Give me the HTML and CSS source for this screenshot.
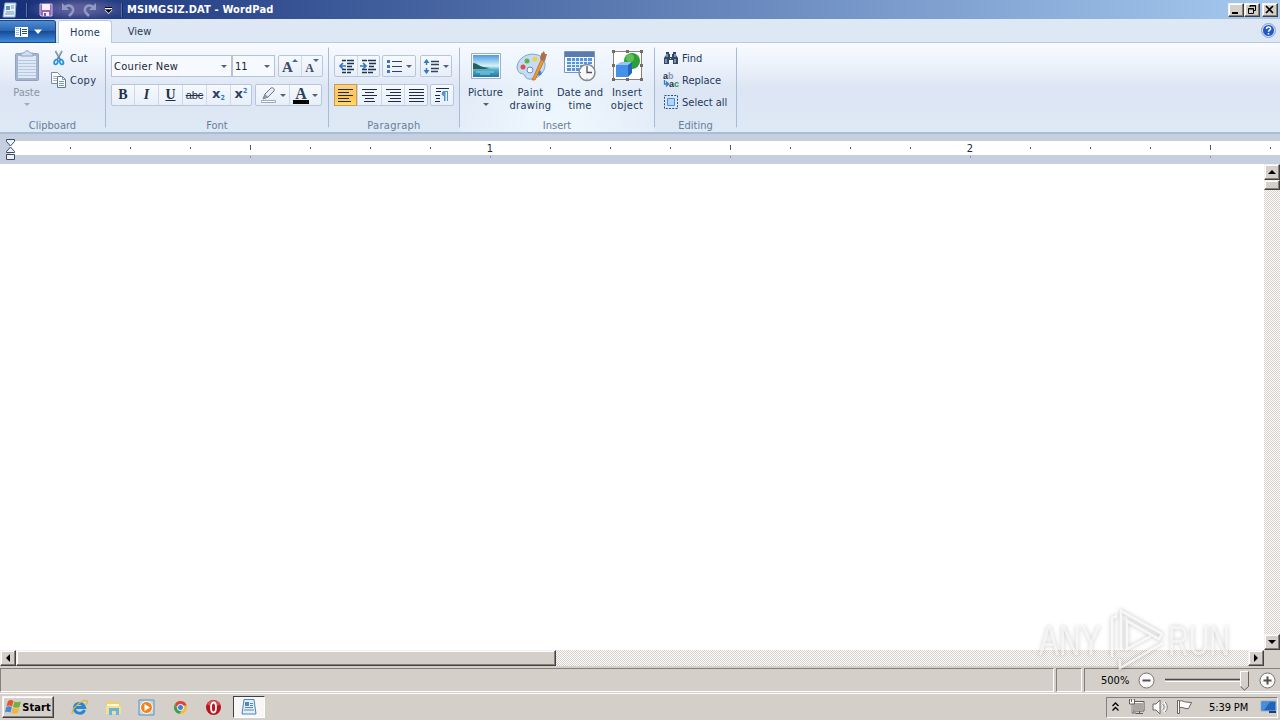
FILE: index.html
```html
<!DOCTYPE html>
<html lang="en">
<head>
  <meta charset="utf-8">
  <title>MSIMGSIZ.DAT - WordPad</title>
  <link rel="stylesheet" href="styles.css">
</head>
<body>

  <!-- Title bar -->
  <div class="titlebar">
    <div class="quick-access">
      <svg class="qa-app" width="16" height="16" viewBox="0 0 16 16"><path d="M3 1h11l-1 14H1z" fill="#e8f1fa" stroke="#87b2d9"/><path d="M4 4h4v4H4z" fill="#5c91bf"/><path d="M9 4h3M9 6h3M4 10h8M3 12h9" stroke="#7196b8"/></svg>
      <span class="qa-sep"></span>
      <svg class="qa-save" width="14" height="14" viewBox="0 0 14 14"><path d="M1 1h12v12H2l-1-1z" fill="#9268b4" stroke="#d0b8e8"/><path d="M3 1h8v6H3z" fill="#fbeef7"/><path d="M4 9h6v4H4z" fill="#f2e8fb"/><path d="M5 10h2v3H5z" fill="#7a559e"/></svg>
      <svg class="qa-undo" width="14" height="14" viewBox="0 0 14 14"><path d="M1 0v7h7z" fill="#8f9ac6"/><path d="M3 5c5-6 12 0 8 5l-3 3" fill="none" stroke="#8f9ac6" stroke-width="2.600"/></svg>
      <svg class="qa-redo" width="14" height="14" viewBox="0 0 14 14"><path d="M13 0v7H6z" fill="#8f9ac6"/><path d="M11 5C6-1-1 5 3 10l3 3" fill="none" stroke="#8f9ac6" stroke-width="2.600"/></svg>
      <svg class="qa-more" width="9" height="8" viewBox="0 0 9 8"><path d="M1 2.500h7" stroke="#fff"/><path d="M1 1.500h7" stroke="#000"/><path d="M.5 4h8l-4 4z" fill="#fff"/><path d="M1.500 4h6l-3 3z"/></svg>
      <span class="qa-sep"></span>
    </div>
    <span class="title">MSIMGSIZ.DAT - WordPad</span>
    <div class="window-buttons">
      <button class="btn3d"><svg width="12" height="10" viewBox="0 0 12 10"><path d="M2 7h6v2H2z"/></svg></button>
      <button class="btn3d"><svg width="12" height="10" viewBox="0 0 12 10"><path d="M4 2V.5h5.500v5H8M4 1h6M2.500 3.500h5v5h-5zM2 4h6" fill="none" stroke="#000"/></svg></button>
      <button class="btn3d close"><svg width="12" height="10" viewBox="0 0 12 10"><path d="M2 1l7 7M9 1L2 8" stroke="#000" stroke-width="1.700"/></svg></button>
    </div>
  </div>

  <!-- Tabs -->
  <div class="tabs">
    <button class="file-tab">
      <svg width="28" height="14" viewBox="0 0 28 14"><path d="M1 2h13v10H1z" fill="#fff"/><path d="M2 3.500h3M2 5.500h3M2 7.500h3M2 9.500h3" stroke="#9bb6dd"/><path d="M6.500 3v8" stroke="#1c4c94"/><path d="M8 4.500h5M8 6.500h5M8 8.500h5" stroke="#2c4c80"/><path d="M20 4.500h8l-4 4.500z" fill="#fff"/></svg>
    </button>
    <span class="tab active">Home</span>
    <span class="tab">View</span>
    <svg class="help" width="15" height="15" viewBox="0 0 15 15"><circle cx="7.500" cy="7.500" r="7" fill="#cddcf4" stroke="#8aa4d4"/><circle cx="7.500" cy="7.500" r="5.500" fill="#2459c4"/><path d="M5.500 6c0-3 4.500-2.500 4 0-.3 1.200-2 1-2 2.800M7.500 10v1.500" fill="none" stroke="#fff" stroke-width="1.500"/></svg>
  </div>

  <!-- Ribbon -->
  <div class="ribbon">
    <div class="group clipboard">
      <div class="group-body">
        <div class="big disabled paste">
          <svg width="32" height="32" viewBox="0 0 32 32"><rect x="4.500" y="3.500" width="23" height="27" rx="1" fill="#a3b5d0" stroke="#8ea3c4"/><path d="M7 6h18v22H7z" fill="#dfe8f5"/><path d="M7 10.500h18M7 13.500h18M7 16.500h18M7 19.500h18M7 22.500h18M7 25.500h18" stroke="#b7c7df"/><path d="M10 6V3h3c1-3 5-3 6 0h3v3z" fill="#d2deef" stroke="#8fa3c4"/></svg>
          <span>Paste</span>
          <i class="arrow"></i>
        </div>
        <div class="small-list">
          <div class="small">
            <svg width="16" height="16" viewBox="0 0 16 16"><path d="M4.500 1l5 9M11 1l-5 9" stroke="#6d86a5" stroke-width="1.700"/><path d="M5 1l3 5M10.500 1L8 5" stroke="#c5d3e2" stroke-width=".7"/><ellipse cx="5" cy="12" rx="1.700" ry="2.500" fill="none" stroke="#2494d8" stroke-width="1.800" transform="rotate(25 5 12)"/><ellipse cx="10.500" cy="12" rx="1.700" ry="2.500" fill="none" stroke="#2494d8" stroke-width="1.800" transform="rotate(-25 10.500 12)"/></svg>
            <span class="t-cut">Cut</span>
          </div>
          <div class="small">
            <svg width="16" height="16" viewBox="0 0 16 16"><path d="M.5.5h6l3 3v8h-9z" fill="#fff" stroke="#7c8ba0"/><path d="M2 4.500h4M2 6.500h4M2 8.500h4" stroke="#a3b8cf"/><path d="M6.500 4.500h5l3 3v8h-8z" fill="#fff" stroke="#67788e"/><path d="M11.500 4.500v3h3M8 9.500h5M8 11.500h5M8 13.500h5" fill="none" stroke="#6c9cc9"/></svg>
            <span class="t-copy">Copy</span>
          </div>
        </div>
      </div>
      <div class="group-label">Clipboard</div>
    </div>

    <div class="group font">
      <div class="group-body rows">
        <div class="row">
          <div class="combo family"><span>Courier New</span><i class="arrow"></i></div>
          <div class="combo size"><span>11</span><i class="arrow"></i></div>
          <div class="set grow">
            <div class="cell w22"><span class="letter big-a">A</span><i class="tri up"></i></div>
            <div class="cell w21"><span class="letter small-a">A</span><i class="tri"></i></div>
          </div>
        </div>
        <div class="row">
          <div class="set">
            <div class="cell w22"><b class="letter">B</b></div>
            <div class="cell w24"><i class="letter">I</i></div>
            <div class="cell w24"><u class="letter">U</u></div>
            <div class="cell w24"><s class="letter strike">abc</s></div>
            <div class="cell w24"><span class="xletter">x</span><sub>2</sub></div>
            <div class="cell w21"><span class="xletter">x</span><sup>2</sup></div>
          </div>
          <div class="set marker">
            <div class="cell w33"><svg width="17" height="17" viewBox="0 0 17 17"><path d="M1.500 13.500h14v2h-14z" fill="#fff" stroke="#a0a8b5"/><path d="M3 12l2-5 6-6c2-1 4 1 3 3L8 10z" fill="#e9edf3" stroke="#697486"/><path d="M5 7l3 3-5 2z" fill="#8b98aa"/></svg><i class="arrow"></i></div>
            <div class="cell w32"><span class="color-a">A</span><i class="arrow"></i></div>
          </div>
        </div>
      </div>
      <div class="group-label">Font</div>
    </div>

    <div class="group paragraph">
      <div class="group-body rows">
        <div class="row">
          <div class="set">
            <div class="cell w22"><svg width="17" height="15" viewBox="0 0 17 15"><path d="M4 1.500h4M9 1.500h7M9 4.500h7M9 7.500h5M4 10.500h4M9 10.500h7M4 13.500h4M9 13.500h4" stroke="#1e3254" stroke-width="1.500"/><path d="M8 7H2m3-3L2 7l3 3" fill="none" stroke="#2e78cf" stroke-width="1.700"/></svg></div>
            <div class="cell w22"><svg width="17" height="15" viewBox="0 0 17 15"><path d="M2 1.500h5M8 1.500h8M9 4.500h7M9 7.500h5M2 10.500h5M8 10.500h8M2 13.500h5M8 13.500h5" stroke="#1e3254" stroke-width="1.500"/><path d="M0 7h6M3 4l3 3-3 3" fill="none" stroke="#2e78cf" stroke-width="1.700"/></svg></div>
          </div>
          <div class="set bullets">
            <div class="cell w32"><svg width="17" height="15" viewBox="0 0 17 15"><path d="M1 1h3v3H1zM1 6h3v3H1zM1 11h3v3H1z" fill="#3c75b9"/><path d="M6 2.500h10M6 7.500h10M6 12.500h10" stroke="#33435d"/></svg><i class="arrow"></i></div>
          </div>
          <div class="set spacing">
            <div class="cell w30"><svg width="17" height="17" viewBox="0 0 17 17"><path d="M8 3.500h8M8 6.500h8M8 10.500h8M8 13.500h7" stroke="#33435d" stroke-width="1.300"/><path d="M3.500 2v5M3.500 10v5" stroke="#2e78cf" stroke-width="1.500"/><path d="M.5 5l3-4 3 4zM.5 12l3 4 3-4z" fill="#2e78cf"/></svg><i class="arrow"></i></div>
          </div>
        </div>
        <div class="row">
          <div class="set">
            <div class="cell w23 on"><svg width="15" height="13" viewBox="0 0 15 13"><path d="M0 .5h15M0 3.500h11M0 6.500h15M0 9.500h11M0 12.500h13" stroke="#1e2c48" stroke-width="1.200"/></svg></div>
            <div class="cell w24"><svg width="15" height="13" viewBox="0 0 15 13"><path d="M0 .5h15M3 3.500h9M0 6.500h15M3 9.500h9M2 12.500h11" stroke="#1e2c48" stroke-width="1.200"/></svg></div>
            <div class="cell w23"><svg width="15" height="13" viewBox="0 0 15 13"><path d="M0 .5h15M4 3.500h11M0 6.500h15M4 9.500h11M2 12.500h13" stroke="#1e2c48" stroke-width="1.200"/></svg></div>
            <div class="cell w23"><svg width="15" height="13" viewBox="0 0 15 13"><path d="M0 .5h15M0 3.500h15M0 6.500h15M0 9.500h15M0 12.500h15" stroke="#1e2c48" stroke-width="1.200"/></svg></div>
          </div>
          <div class="set mark">
            <div class="cell w22"><svg width="14" height="14" viewBox="0 0 14 14"><path d="M1 .5h13M1 3.500h5M0 7.500h5M1 10.500h4M0 13.500h5" stroke="#1e2c48" stroke-width="1.200"/><path d="M13 3H9C6 3 6 8 9 8v5h1.500V4H12v9h1z" fill="#4b91dc"/></svg></div>
          </div>
        </div>
      </div>
      <div class="group-label">Paragraph</div>
    </div>

    <div class="group insert">
      <div class="group-body">
        <div class="big picture">
          <svg width="32" height="32" viewBox="0 0 32 32"><defs><linearGradient id="sky" x2="0" y2="1"><stop offset="0" stop-color="#4a9ce4"/><stop offset=".5" stop-color="#d8f2f7"/><stop offset=".65" stop-color="#57b3cf"/><stop offset="1" stop-color="#2274a4"/></linearGradient></defs><path d="M1.500 3.500h29v25h-29z" fill="#fff" stroke="#a2aebd"/><path d="M3 5h26v22H3z" fill="url(#sky)"/><path d="M3 13c4 0 6 3 10 4l7 1-5 1H3z" fill="#28605c"/><path d="M6 22h18M10 24h10" stroke="#8ed5e5"/></svg>
          <span>Picture</span>
          <i class="arrow"></i>
        </div>
        <div class="big paint">
          <svg width="32" height="32" viewBox="0 0 32 32"><path d="M2 17C3 7 14 2 23 5c8 3 9 12 4 18-5 7-16 8-17 3-1-4-7 0-8-9z" fill="#c5dcf2" stroke="#7aa4cd"/><circle cx="8" cy="17" r="2.500" fill="#e44c52"/><circle cx="12" cy="11" r="2.500" fill="#5bb346"/><circle cx="20" cy="9" r="2.500" fill="#f1d143"/><circle cx="15" cy="20" r="3" fill="#f7fbff" stroke="#5c8fc3"/><circle cx="24" cy="23" r="2.500" fill="#3d83d5"/><path d="M17 30l9-20 3 1-9 19z" fill="#ef9735" stroke="#b7651d" stroke-width=".7"/><path d="M25 9l1-5 3-3 1 3 2 0-2 7-4-1z" fill="#ae7049"/></svg>
          <span class="t-paint">Paint<br>drawing</span>
        </div>
        <div class="big date">
          <svg width="32" height="32" viewBox="0 0 32 32"><path d="M.5 1.500h30v21H.5z" fill="#fff" stroke="#7c94b8"/><path d="M1 2h29v5H1z" fill="#587dad"/><path d="M3 8h25v13H3z" fill="#5594db"/><path d="M7.500 8v14M11.500 8v14M15.500 8v14M19.500 8v14M23.500 8v14M3 11.500h25M3 14.500h25M3 17.500h25" stroke="#e6f0fc"/><circle cx="23" cy="22.500" r="8" fill="#f8f8f8" stroke="#858a90" stroke-width="1.500"/><path d="M23 16v6.500h5" fill="none" stroke="#4c5158" stroke-width="1.300"/><path d="M23 28.500v1M16 22.500h1" stroke="#666"/></svg>
          <span>Date and<br>time</span>
        </div>
        <div class="big object">
          <svg width="32" height="32" viewBox="0 0 32 32"><path d="M2.500 1.500h28v28h-28z" fill="#fff" stroke="#8b8179"/><circle cx="21" cy="11" r="8" fill="#2c9f38"/><circle cx="19" cy="8" r="4" fill="#5cc258"/><path d="M5 15l5-3h11l-3 3z" fill="#92c6fa"/><path d="M5 15h12v12H5z" fill="#4591e7"/><path d="M17 15l4-3v11l-4 4z" fill="#2467b7"/><path d="M1 0h3v3H1zM15 0h3v3h-3zM29 0h3v3h-3zM1 14h3v3H1zM29 14h3v3h-3zM1 28h3v3H1zM15 28h3v3h-3zM29 28h3v3h-3z" fill="#766b65"/></svg>
          <span class="t-object">Insert<br>object</span>
        </div>
      </div>
      <div class="group-label">Insert</div>
    </div>

    <div class="group editing">
      <div class="group-body">
        <div class="small-list">
          <div class="small">
            <svg width="16" height="16" viewBox="0 0 16 16"><path d="M3 2h3v2h1v3h2V4h1V2h3v3l2 3v6h-5v-4H6v4H1V8l2-3z" fill="#32466a"/><path d="M4 4v3M12 4v3M3 9v4M12 9v4M7.500 8v1" stroke="#cddbf0"/></svg>
            <span>Find</span>
          </div>
          <div class="small">
            <svg width="16" height="16" viewBox="0 0 16 16"><text x="0" y="7" class="svg-bold" fill="#1e2c48">a</text><text x="5" y="7" class="svg-bold" fill="#8996aa">b</text><text x="6" y="15" class="svg-bold" fill="#1e2c48">a</text><text x="11" y="15" class="svg-bold" fill="#2c9444">c</text><path d="M1.500 8v4h4M3 9.500l2.500 2.500L3 14.500" fill="none" stroke="#2e78cf" stroke-width="1.300"/></svg>
            <span class="t-replace">Replace</span>
          </div>
          <div class="small">
            <svg width="16" height="16" viewBox="0 0 16 16"><path d="M1.500 1.500h13v13h-13z" fill="none" stroke="#23518f" stroke-dasharray="2 1.250"/><path d="M4.500 4.500h7v7h-7z" fill="#b1d5fb" stroke="#4a90df"/></svg>
            <span>Select all</span>
          </div>
        </div>
      </div>
      <div class="group-label">Editing</div>
    </div>
  </div>

  <!-- Ruler -->
  <div class="ruler">
    <svg class="indent" width="11" height="24" viewBox="0 0 11 24"><path d="M1.500 1.500h8v2l-4 4.500-4-4.500zM5.500 9l4 4.500v1h-8v-1zM1.500 16.500h8v5h-8z" fill="#eef2f8" stroke="#3b4a62"/></svg>
    <div class="ticks">
      <span></span><span></span><span></span><span class="half"></span>
      <span></span><span></span><span></span><span class="inch">1</span>
      <span></span><span></span><span></span><span class="half"></span>
      <span></span><span></span><span></span><span class="inch">2</span>
      <span></span><span></span><span></span><span class="half"></span>
      <span></span>
    </div>
  </div>

  <!-- Document -->
  <div class="document">
    <div class="page"></div>
    <div class="vscroll">
      <button class="btn3d"><i class="sa up"></i></button>
      <div class="btn3d thumb"></div>
      <button class="btn3d last"><i class="sa down"></i></button>
    </div>
  </div>
  <div class="hscroll">
    <button class="btn3d"><i class="sa left"></i></button>
    <div class="btn3d thumb"></div>
    <button class="btn3d last"><i class="sa right"></i></button>
    <div class="corner"></div>
  </div>

  <!-- Status bar -->
  <div class="statusbar">
    <div class="panel message"></div>
    <div class="panel blank"></div>
    <div class="panel zoom">
      <span>500%</span>
      <svg class="minus" width="17" height="17" viewBox="0 0 17 17"><circle cx="8.500" cy="8.500" r="7.500" fill="#fbfafa" stroke="#77736f"/><path d="M4.500 8.500h8" stroke="#55514e" stroke-width="2"/></svg>
      <svg class="slider" width="88" height="21" viewBox="0 0 88 21"><path d="M1 9.500h78" stroke="#4c4845" stroke-width="1.500"/><path d="M1 11.500h78" stroke="#fff"/><path d="M76.500 1.500h8v15l-4 3.500-4-3.500z" fill="#d5cfca"/><path d="M76.500 17V1.500h8" fill="none" stroke="#fff"/><path d="M84.500 1.500v15l-4 3.500-4-3.500" fill="none" stroke="#65605c"/></svg>
      <svg width="17" height="17" viewBox="0 0 17 17"><circle cx="8.500" cy="8.500" r="7.500" fill="#fbfafa" stroke="#77736f"/><path d="M4.500 8.500h8M8.500 4.500v8" stroke="#55514e" stroke-width="2"/></svg>
    </div>
  </div>

  <!-- Taskbar -->
  <div class="taskbar">
    <button class="start btn3d">
      <svg width="17" height="16" viewBox="0 0 17 16"><path d="M3 2c2-1.500 4-1 5.500 0L7 7.500C5 6 3 6.500 1.500 7z" fill="#e4572b"/><path d="M9.500 2.500c2 1 4 1 6.500 0L14.500 8c-2 1-4.500.8-6.500-.2z" fill="#71b144"/><path d="M1.300 8c2-1 4-1 5.500.3L5.500 13.500C4 12.500 2 12.300 0 13.200z" fill="#4489d4"/><path d="M7.700 8.800c2 1 4.500 1.200 6.600.2l-1.500 5c-2 1-4.300.8-6.300-.2z" fill="#f2b834"/></svg>
      <span>Start</span>
    </button>
    <div class="launch">
      <svg width="17" height="17" viewBox="0 0 17 17"><path d="M13.500 11C11.500 16 3.500 15 3.500 9S12 3 13.500 8.500H5" fill="none" stroke="#2488d4" stroke-width="3"/><path d="M1.500 15C-1 11 12-1 16 2c1 1-.5 3-1 4" fill="none" stroke="#e0b637" stroke-width="1.300"/></svg>
      <svg width="17" height="17" viewBox="0 0 17 17"><path d="M1 3l5-1 1 1h8v12H1z" fill="#efd06f"/><path d="M2 5h12v3H2z" fill="#fff9d0"/><path d="M1 7h15v8H1z" fill="#f5df8d"/><path d="M4 9h10v7h-3v-4H7v4H4z" fill="#65b4e4"/></svg>
      <svg width="17" height="17" viewBox="0 0 17 17"><path d="M1 1h15v15H1z" fill="#b9d9ef" stroke="#5f93bd"/><circle cx="8.500" cy="8.500" r="6" fill="#f08519" stroke="#fff"/><path d="M6.500 5l5.500 3.500L6.500 12z" fill="#fff"/></svg>
      <svg width="17" height="17" viewBox="0 0 17 17"><circle cx="8.500" cy="8.500" r="6.500" fill="#f0bf32"/><path d="M2.900 5.200A6.500 6.500 0 0 1 14.700 6.500H8.500L6 9z" fill="#d9453b"/><path d="M2.900 5.200A6.500 6.500 0 0 0 7.500 15L10 10.500 6 10z" fill="#3f9e53"/><circle cx="8.500" cy="8.500" r="3.100" fill="#437fdb" stroke="#fff"/></svg>
      <svg width="17" height="17" viewBox="0 0 17 17"><circle cx="8.500" cy="8.500" r="7.500" fill="#b9141d"/><path d="M2 5a7 6 0 0 1 13 0c-2 3-10 3-13 0z" fill="#d65153"/><ellipse cx="8.500" cy="8.500" rx="2.500" ry="5" fill="#b41a22" stroke="#fff" stroke-width="1.800"/></svg>
    </div>
    <div class="task-active">
      <svg width="16" height="16" viewBox="0 0 16 16"><path d="M3 .5h10l2 14.500H1z" fill="#e2effb" stroke="#4c83b8"/><path d="M4 3h4v4H4z" fill="#4b89c5"/><path d="M9 4.500h3M9 6.500h3M4 8.500h8M3 11h10" stroke="#5687b3"/></svg>
    </div>
    <div class="tray">
      <svg class="chev" width="7" height="10" viewBox="0 0 7 10"><path d="M.5 4l3-3 3 3M.5 8.500l3-3 3 3" fill="none" stroke="#000" stroke-width="1.300"/></svg>
      <svg width="17" height="16" viewBox="0 0 17 16"><path d="M5.500 3.500h10v8h-10z" fill="#aaa6a2" stroke="#fff"/><path d="M5 2.500h11v9.500H5zM8 14.500h7M11.500 12v2" fill="none" stroke="#5c5854"/><path d="M1 1h5v4H1zM3 5h2v9H3z" fill="#fff"/><path d="M1.500 0v5h5V0M4 5v9h4M3.500 0v3" fill="none" stroke="#65605c"/></svg>
      <svg width="17" height="16" viewBox="0 0 17 16"><path d="M1 5h3l4-4v14l-4-4H1z" fill="#fff" stroke="#696561"/><path d="M10 5c2 2 2 4 0 6M12 3c3.500 3 3.500 7 0 10" fill="none" stroke="#fff" stroke-width="2"/><path d="M10.500 5c2 2 2 4 0 6M13 3c3 3 3 7 0 10" fill="none" stroke="#77736f"/></svg>
      <svg width="17" height="16" viewBox="0 0 17 16"><path d="M1.500 1.500h2v13h-2z" fill="#fff" stroke="#696561"/><path d="M3.500 2c3-1 4 1 6 1l6 .5-3 6c-4 1-5-2-9-1z" fill="#fff" stroke="#696561"/></svg>
      <span class="clock">5:39 PM</span>
      <svg width="17" height="14" viewBox="0 0 17 14"><path d="M1 1h15v10H1z" fill="#2064b8" stroke="#97b8da"/><path d="M2 2h8L4 10H2z" fill="#4b8dd7"/><path d="M9 12h7" stroke="#183f7b" stroke-width="2"/></svg>
    </div>
  </div>

  <!-- Watermark over the window -->
  <svg class="watermark" width="220" height="80" viewBox="0 0 220 80">
    <text x="9" y="55" textLength="62" lengthAdjust="spacingAndGlyphs">ANY</text>
    <path d="M82 57V18l5-2M91 50V11l41 23-3 5-32-18v28l24-13M90 59v9l43-25"/>
    <text x="138" y="55" textLength="62" lengthAdjust="spacingAndGlyphs">RUN</text>
  </svg>

</body>
</html>
```
FILE: styles.css
```css
* {
  box-sizing: border-box;
}

body {
  margin: 0;
  width: 1280px;
  height: 720px;
  overflow: hidden;
  display: flex;
  flex-direction: column;
  position: relative;
  background: #fff;
  font-family: "DejaVu Sans Condensed", "DejaVu Sans", sans-serif;
  font-size: 11px;
  color: #1e395b;
}

svg {
  display: block;
  flex: none;
}

button {
  padding: 0;
  font: inherit;
}

/* Raised grey control */
.btn3d {
  display: flex;
  flex: none;
  align-items: center;
  justify-content: center;
  background: #d5cfca;
  border: 1px solid;
  border-color: #f4f2f0 #404040 #404040 #f4f2f0;
  box-shadow: inset -1px -1px #85807b, inset 1px 1px #fff;
}

/* Title bar */
.titlebar {
  height: 19px;
  flex: none;
  display: flex;
  align-items: center;
  background: linear-gradient(to right, #152f78, #a6caf0);
}

.quick-access {
  width: 127px;
  height: 19px;
  display: flex;
  align-items: center;
  padding-left: 2px;
  background: radial-gradient(ellipse 52px 12px at 78px 9px, #5c5d98 30%, transparent);
}

.qa-sep {
  width: 2px;
  height: 14px;
  margin-left: 8px;
  background: #5f70a4;
  border-right: 1px solid #152965;
}

.qa-save {
  margin-left: 11px;
}

.qa-undo {
  margin-left: 8px;
}

.qa-redo {
  margin-left: 8px;
}

.qa-more {
  margin-left: 7px;
}

.title {
  color: #fff;
  font-weight: bold;
  letter-spacing: 0.15px;
}

.window-buttons {
  margin-left: auto;
  display: flex;
  padding-right: 2px;
}

.window-buttons .btn3d {
  width: 16px;
  height: 14px;
}

.window-buttons .close {
  margin-left: 2px;
}

/* Tabs */
.tabs {
  height: 24px;
  flex: none;
  display: flex;
  background: linear-gradient(#dfe7f4, #dce8f4);
  border-bottom: 1px solid #b9c9e0;
}

.file-tab {
  width: 56px;
  height: 23px;
  margin-top: 1px;
  display: flex;
  align-items: center;
  justify-content: center;
  border: 1px solid #1c4688;
  border-left: none;
  border-radius: 0 3px 0 0;
  background: linear-gradient(#4f8cd3, #2c67b3 45%, #164c98 50%, #3f8bdd);
}

.tab {
  width: 55px;
  height: 24px;
  margin-top: 1px;
  line-height: 24px;
  text-align: center;
}

.tab.active {
  width: 54px;
  margin-left: 2px;
  line-height: 23px;
  letter-spacing: 0.2px;
  background: linear-gradient(#fff, #f7faff);
  border: 1px solid #bacbe1;
  border-bottom: none;
  border-radius: 3px 3px 0 0;
}

.help {
  margin: 4px 4px 0 auto;
}

/* Ribbon */
.ribbon {
  height: 91px;
  flex: none;
  display: flex;
  background: linear-gradient(#f8fbff, #eaf0fa 30%, #dce5f3 52%, #dee9f6);
  border-bottom: 2px solid #aabdd5;
}

.group {
  height: 89px;
  padding-top: 5px;
  border-right: 1px solid;
  border-image: linear-gradient(transparent 5px, #a9bbd3 6px, #a9bbd3 83px, transparent 84px) 1;
}

.clipboard { width: 106px; }
.font { width: 223px; }
.paragraph { width: 131px; }
.insert { width: 195px; background: radial-gradient(ellipse at 50% 100%, #f0f8ff, rgba(240, 248, 255, 0.3) 75%); }
.editing { width: 82px; }

.group-body {
  height: 69px;
  display: flex;
}

.group-label {
  text-align: center;
  line-height: 17px;
  color: #697d99;
}

.paragraph .group-label {
  letter-spacing: 0.3px;
}

.big {
  display: flex;
  flex-direction: column;
  align-items: center;
  padding-top: 2px;
  text-align: center;
  line-height: 13px;
}

.big span {
  margin-top: 4px;
  white-space: nowrap;
}

.disabled {
  color: #8894a5;
}

.paste { width: 53px; }
.picture { width: 45px; margin-left: 3px; letter-spacing: 0.15px; }
.paint { width: 45px; letter-spacing: 0.3px; }
.date { width: 54px; letter-spacing: 0.1px; }
.object { width: 40px; letter-spacing: 0.3px; }

.arrow {
  width: 0;
  height: 0;
  flex: none;
  border: 3px solid transparent;
  border-top: 3px solid #53627a;
  border-bottom: 0;
}

.big .arrow {
  margin-top: 4px;
}

.disabled .arrow {
  border-top-color: #a3acba;
}

.small {
  height: 22px;
  display: flex;
  align-items: center;
  gap: 3px;
  white-space: nowrap;
}

.t-cut,
.t-copy {
  letter-spacing: 0.3px;
}

.clipboard .small {
  margin-left: -2px;
}

.clipboard .small-list,
.editing .small-list {
  margin-top: -1px;
}

.editing .small-list {
  padding-left: 8px;
}

.svg-bold {
  font: bold 9px "Liberation Sans", Arial, sans-serif;
}

.rows {
  flex-direction: column;
  gap: 7px;
  padding: 7px 0 0 5px;
}

.row {
  display: flex;
  height: 22px;
}

.combo {
  display: flex;
  align-items: center;
  justify-content: space-between;
  padding: 0 4px 0 2px;
  background: #f6f9fd;
  border: 1px solid #b5c3d7;
  color: #1a2536;
}

.family { width: 121px; letter-spacing: 0.3px; }
.size { width: 43px; }

.set {
  display: flex;
  border: 1px solid #b6c6db;
  border-radius: 2px;
  background: linear-gradient(#f6f9fd, #e8eff8);
}

.grow { margin-left: 3px; }
.marker { margin-left: 3px; }
.bullets { margin-left: 2px; }
.spacing { margin-left: 4px; }
.mark { margin-left: 2px; }

.cell {
  display: flex;
  align-items: center;
  justify-content: center;
  gap: 3px;
}

.cell + .cell {
  border-left: 1px solid #cdd9e8;
}

.w21 { width: 21px; }
.w22 { width: 22px; }
.w23 { width: 23px; }
.w24 { width: 24px; }
.w30 { width: 30px; }
.w32 { width: 32px; }
.w33 { width: 33px; }

.on {
  margin: -1px 0 -1px -1px;
  background: linear-gradient(#fbd185, #ffc44f 60%, #ffdb75);
  border: 1px solid #c99c4c;
}

.letter {
  font-family: "Liberation Serif", serif;
  font-weight: bold;
  font-size: 14px;
  line-height: 16px;
  color: #22304a;
}

.big-a { font-size: 15px; margin-top: 2px; color: #3a4c66; }
.small-a { font-size: 12px; margin-top: 4px; color: #3a4c66; }

.strike {
  font-family: "Liberation Sans", sans-serif;
  font-weight: normal;
  font-size: 11px;
}

.tri {
  width: 0;
  height: 0;
  margin: 0 0 11px -4px;
  border: 3px solid transparent;
  border-top: 3px solid #3c6ca8;
  border-bottom: 0;
}

.tri.up {
  border-bottom: 3px solid #3c6ca8;
  border-top: 0;
}

.xletter {
  font-family: "DejaVu Sans", sans-serif;
  font-size: 13px;
  font-weight: bold;
  line-height: 14px;
  margin-top: -3px;
  color: #2b4263;
}

.cell sub,
.cell sup {
  margin-left: -3px;
  font-size: 7px;
  font-weight: bold;
  line-height: 8px;
  color: #2e78cf;
}

.cell sub { margin-top: 6px; }
.cell sup { margin-top: -8px; }

.color-a {
  width: 16px;
  height: 17px;
  font: bold 16px/13px "Liberation Serif", serif;
  text-align: center;
  color: #28405e;
  border-bottom: 4px solid #000;
}

/* Ruler */
.ruler {
  height: 30px;
  flex: none;
  display: flex;
  padding: 4px 0 0 5px;
  background: #c5cfdf;
}

.ticks {
  height: 14px;
  margin: 3px 0 0 -6px;
  padding-left: 30px;
  flex: 1;
  display: flex;
  overflow: visible;
  background: #fff;
}

.indent {
  position: relative;
  z-index: 1;
}

.ticks span {
  width: 60px;
  height: 17px;
  flex: none;
  color: #1b2a40;
  line-height: 15px;
  text-align: center;
  background: linear-gradient(#4c5563, #4c5563) 30px 6px / 1px 2px no-repeat;
}

.ticks .half {
  background: linear-gradient(#4c5563, #4c5563) 30px 4px / 1px 5px no-repeat, linear-gradient(#8d98a9, #8d98a9) 30px 15px / 1px 2px no-repeat;
}

.ticks .inch {
  background: linear-gradient(#8d98a9, #8d98a9) 30px 15px / 1px 2px no-repeat;
}

/* Document and scroll bars */
.document {
  height: 486px;
  flex: none;
  display: flex;
}

.page {
  flex: 1;
  background: #fff;
}

.vscroll,
.hscroll {
  display: flex;
  background: repeating-conic-gradient(#fff 0 25%, #d5cfca 0 50%) 0 0 / 2px 2px;
}

.vscroll {
  width: 16px;
  flex-direction: column;
}

.vscroll .btn3d {
  height: 16px;
}

.vscroll .thumb {
  height: 10px;
}

.vscroll .last {
  margin-top: auto;
}

.hscroll {
  height: 16px;
  flex: none;
}

.hscroll .btn3d {
  width: 16px;
}

.hscroll .thumb {
  width: 540px;
}

.hscroll .last {
  margin-left: auto;
}

.corner {
  width: 16px;
  background: #d5cfca;
}

.sa {
  width: 0;
  height: 0;
  border: 4px solid transparent;
}

.sa.up { border-bottom-color: #000; border-top: 0; }
.sa.down { border-top-color: #000; border-bottom: 0; }
.sa.left { border-right-color: #000; border-left: 0; }
.sa.right { border-left-color: #000; border-right: 0; }

/* Status bar */
.statusbar {
  height: 27px;
  flex: none;
  display: flex;
  gap: 2px;
  padding: 2px 0 1px;
  background: #d5cfca;
  color: #000;
}

.panel {
  border: 1px solid;
  border-color: #85807b #fff #fff #85807b;
}

.message { width: 1054px; }
.blank { width: 26px; }

.zoom {
  flex: 1;
  display: flex;
  align-items: center;
  padding-left: 16px;
  border-right: none;
}

.zoom span {
  width: 37px;
}

.slider {
  margin: 0 7px 0 9px;
}

/* Taskbar */
.taskbar {
  height: 27px;
  flex: none;
  display: flex;
  align-items: center;
  padding: 0 2px 0;
  background: #d5cfca;
  border-top: 1px solid #fff;
  color: #000;
}

.start {
  width: 52px;
  height: 22px;
  gap: 0;
  font-weight: bold;
}

.start span {
  letter-spacing: 0.1px;
}

.launch {
  display: flex;
  gap: 16.500px;
  margin-left: 17px;
}

.task-active {
  width: 32px;
  height: 22px;
  margin-left: 11px;
  display: flex;
  align-items: center;
  justify-content: center;
  background: #f8f7f6;
  border: 1px solid;
  border-color: #404040 #fff #fff #404040;
}

.tray {
  width: 172px;
  height: 21px;
  margin-left: auto;
  display: flex;
  align-items: center;
  padding-left: 5px;
  gap: 7px;
  border: 1px solid;
  border-color: #85807b #fff #fff #85807b;
}

.chev {
  margin-right: 2px;
}

.clock {
  width: 44px;
  margin-left: 9px;
  white-space: nowrap;
  letter-spacing: -0.1px;
}

.watermark {
  position: absolute;
  left: 1030px;
  top: 600px;
  overflow: visible;
  fill: none;
  stroke: #fff;
  stroke-width: 2.500;
  stroke-opacity: 0.75;
  filter: drop-shadow(0 0 2px rgba(0, 0, 0, 0.35));
}

.watermark text {
  font: 43px "Liberation Sans", Arial, sans-serif;
  fill: #fff;
  fill-opacity: 0.6;
  stroke: none;
}
```
